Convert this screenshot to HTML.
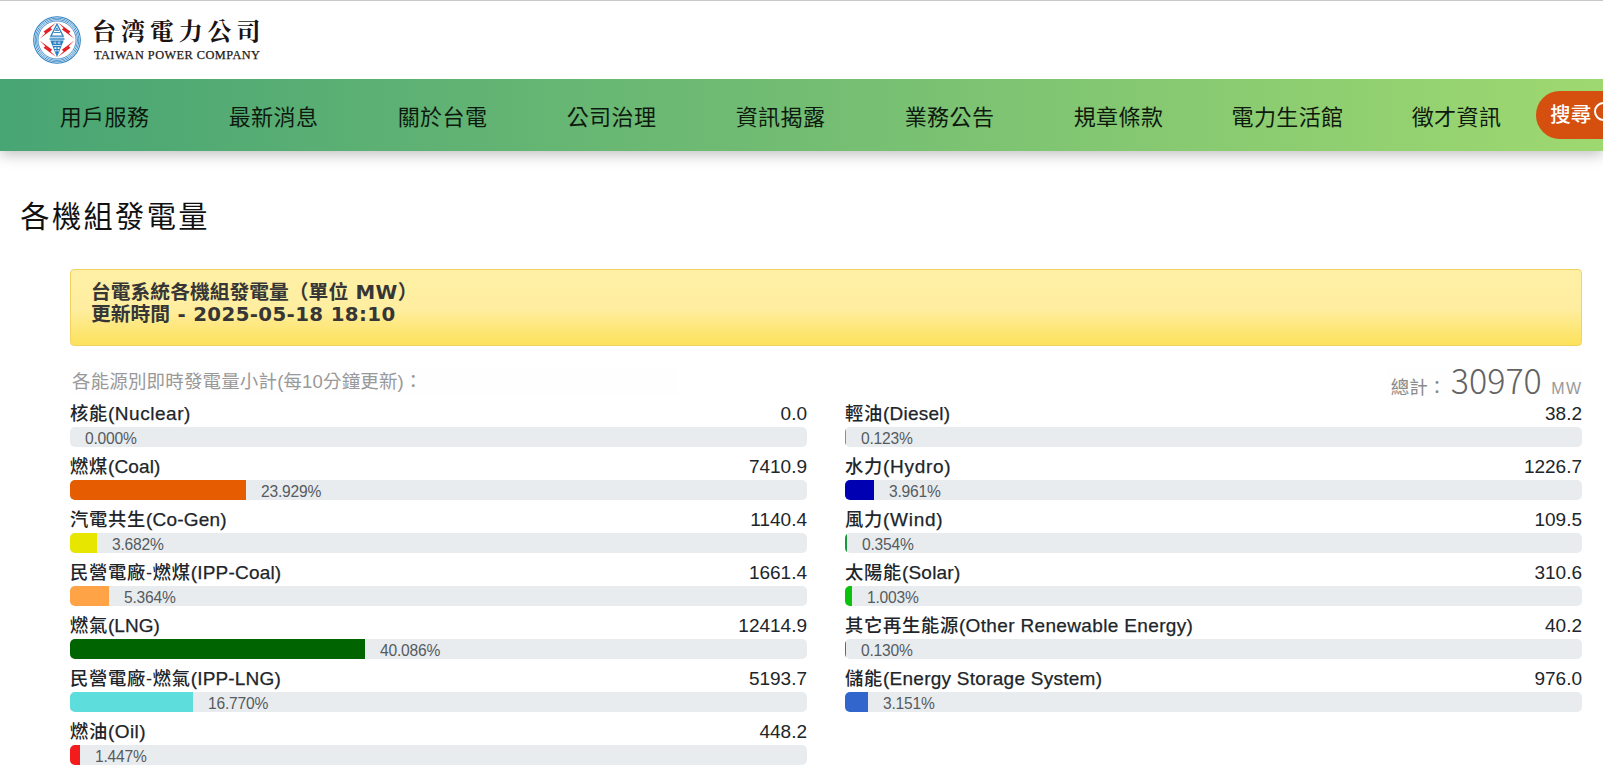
<!DOCTYPE html>
<html lang="zh-Hant">
<head>
<meta charset="utf-8">
<title>各機組發電量</title>
<style>
*{box-sizing:border-box;margin:0;padding:0}
html,body{width:1603px;height:780px;overflow:hidden;background:#fff}
body{position:relative;font-family:"Liberation Sans","Noto Sans CJK TC",sans-serif;color:#212529}
.topline{position:absolute;left:0;top:0;width:1603px;height:1px;background:#c8c8c8}
.logo{position:absolute;left:32.5px;top:16px;width:48px;height:48px}
.logo-zh{position:absolute;left:92px;top:14px;font-family:"Liberation Serif","Noto Serif CJK TC","Noto Serif CJK SC",serif;font-weight:700;font-size:24px;line-height:36px;letter-spacing:4.9px;color:#1a1311;white-space:nowrap}
.logo-en{position:absolute;left:94px;top:48px;font-family:"Liberation Serif",serif;font-size:12.3px;line-height:14px;color:#231815;white-space:nowrap;letter-spacing:.47px;-webkit-text-stroke:.25px #231815}
.nav{position:absolute;left:0;top:79px;width:1603px;height:72px;background:linear-gradient(90deg,#48a574 0%,#73bd73 50%,#9ed870 100%);box-shadow:0 3px 14px rgba(0,0,0,.27);clip-path:inset(0 0 -40px 0)}
.nav a{position:absolute;top:0;height:72px;line-height:77px;width:169px;text-align:center;font-size:22px;color:#0f1a0f;text-decoration:none;white-space:nowrap;letter-spacing:.4px}
.search{position:absolute;left:1535.7px;top:12px;width:90px;height:47.5px;border-radius:23.75px;background:#d5500f;color:#fff;font-weight:500;font-size:20.5px;line-height:48px;padding-left:14.5px;white-space:nowrap}
.search i{position:absolute;left:58.3px;top:11px;width:19px;height:19px;border:2.5px solid #fff;border-radius:50%}
h1{position:absolute;left:20.3px;top:194.8px;font-size:29.2px;line-height:44px;font-weight:400;color:#111;letter-spacing:2.4px;white-space:nowrap}
.hl{position:absolute;left:70px;top:269px;width:1512px;height:77px;border:1px solid #f1d263;border-radius:4px;background:linear-gradient(180deg,#fff0a6 0%,#ffeea0 52%,#fee77c 76%,#fde25c 100%);padding:12px 0 0 20px;font-family:"DejaVu Sans","Noto Sans CJK TC",sans-serif;font-weight:700;font-size:19.8px;line-height:21.7px;color:#363636;white-space:nowrap}
.hl .la{letter-spacing:.37px}
.sub{position:absolute;left:72px;top:368px;font-size:18.5px;line-height:27px;color:#999;white-space:nowrap;letter-spacing:.15px}
.total{position:absolute;right:22px;top:357.7px;height:44px;color:#8a8a8a;white-space:nowrap;font-size:18.5px;line-height:44px}
.total b{font-family:"Noto Sans CJK TC","Liberation Sans",sans-serif;font-weight:300;font-size:34px;color:#636363;margin:0 9.5px 0 4.5px}
.total small{font-size:16px;color:#999;letter-spacing:1.3px;margin-right:-1.3px}
.row{position:absolute;width:737px;height:53px}
.row .l{position:absolute;left:0;top:.7px;font-size:18.3px;letter-spacing:.7px;font-weight:500;line-height:28px;white-space:nowrap}
.row .l span{font-size:19px;-webkit-text-stroke:.25px #212529}
.row .v{position:absolute;right:0;top:.7px;font-size:19px;line-height:28px;white-space:nowrap}
.bar{position:absolute;left:0;top:28px;width:737px;height:20px;border-radius:5px;background:#e9ecef;overflow:hidden}
.bar i{position:absolute;left:0;top:0;height:20px;display:block}
.bar span{position:absolute;top:0;font-size:15.6px;line-height:23.8px;color:#555b60;white-space:nowrap;letter-spacing:-.2px}
</style>
</head>
<body>
<div class="topline"></div>
<svg class="logo" viewBox="0 0 48 48">
<circle cx="24" cy="24" r="23.3" fill="none" stroke="#2a80c2" stroke-width="1.1"/>
<circle cx="24" cy="24" r="21.85" fill="none" stroke="#2a80c2" stroke-width=".85"/>
<circle cx="24" cy="24" r="20.45" fill="none" stroke="#2a80c2" stroke-width=".85"/>
<circle cx="24" cy="24" r="19.05" fill="none" stroke="#2a80c2" stroke-width=".85"/>
<path d="M23.10 6.40 L12.21 17.22 L10.59 15.59 Z M6.60 22.80 L17.49 11.98 L19.11 13.61 Z M24.90 6.40 L35.79 17.22 L37.41 15.59 Z M41.40 22.80 L30.51 11.98 L28.89 13.61 Z M23.10 41.10 L12.21 30.21 L10.58 31.84 Z M6.60 24.60 L17.49 35.49 L19.12 33.86 Z M24.90 41.10 L35.79 30.21 L37.42 31.84 Z M41.40 24.60 L30.51 35.49 L28.88 33.86 Z" fill="#e21f26"/>
<path d="M24 6.7 L16.8 20.7 H31.2 Z M24 9.5 L18.9 19.6 H29.1 Z" fill="#2a80c2" fill-rule="evenodd"/>
<path d="M24 11 L21.9 15 H26.1 Z M24 12.8 L23.3 14.2 H24.7 Z" fill="#2a80c2" fill-rule="evenodd"/>
<rect x="20.6" y="16.1" width="6.8" height=".9" fill="#2a80c2"/>
<rect x="17" y="21.2" width="14" height=".6" fill="#8cc3ea"/>
<rect x="16.5" y="22.3" width="15" height="1.4" fill="#2a80c2"/>
<path d="M17.3 24.5 H30.7 L24 41.2 Z" fill="#2a80c2"/>
<path d="M21.2 25.6 V28 M26.8 25.6 V28 M22.7 25.6 V28 M25.3 25.6 V28" stroke="#fff" stroke-width=".7" fill="none"/>
<path d="M19.8 29.5 H28.2" stroke="#fff" stroke-width=".8" fill="none"/>
<path d="M21.5 31.3 H23.4 V32.9 H21.5 Z M24.6 31.3 H26.5 V32.9 H24.6 Z M22.3 34.1 H23.4 V35.5 H22.3 Z M24.6 34.1 H25.7 V35.5 H24.6 Z" fill="#fff"/>
</svg>
<div class="logo-zh">台湾電力公司</div>
<div class="logo-en">TAIWAN POWER COMPANY</div>

<div class="nav">
<a style="left:20px">用戶服務</a>
<a style="left:189px">最新消息</a>
<a style="left:358px">關於台電</a>
<a style="left:527px">公司治理</a>
<a style="left:696px">資訊揭露</a>
<a style="left:865px">業務公告</a>
<a style="left:1034px">規章條款</a>
<a style="left:1203px">電力生活館</a>
<a style="left:1372px">徵才資訊</a>
<div class="search">搜尋<i></i></div>
</div>

<h1>各機組發電量</h1>

<div class="hl">台電系統各機組發電量（單位<span class="la"> MW</span>）<br>更新時間<span class="la"> - 2025-05-18 18:10</span></div>

<div style="position:absolute;left:70px;top:368px;width:607px;height:27px;background:#fefefe"></div>
<div style="position:absolute;left:1387px;top:367px;width:195px;height:31px;background:#fefefe"></div>
<div class="sub">各能源別即時發電量小計(每10分鐘更新)：</div>
<div class="total">總計：<b>30970</b><small>MW</small></div>

<!-- left column -->
<div class="row" style="left:70px;top:399px"><div class="l">核能<span style="letter-spacing:0.54px">(Nuclear)</span></div><div class="v">0.0</div><div class="bar"><i style="width:0;background:#ff0"></i><span style="left:15px">0.000%</span></div></div>
<div class="row" style="left:70px;top:452px"><div class="l">燃煤<span style="letter-spacing:0.12px">(Coal)</span></div><div class="v">7410.9</div><div class="bar"><i style="width:176px;background:#e65c00"></i><span style="left:191px">23.929%</span></div></div>
<div class="row" style="left:70px;top:505px"><div class="l">汽電共生<span style="letter-spacing:0.2px">(Co-Gen)</span></div><div class="v">1140.4</div><div class="bar"><i style="width:27px;background:#e6e600"></i><span style="left:42px">3.682%</span></div></div>
<div class="row" style="left:70px;top:558px"><div class="l">民營電廠-燃煤<span style="letter-spacing:0.2px">(IPP-Coal)</span></div><div class="v">1661.4</div><div class="bar"><i style="width:39px;background:#ffa347"></i><span style="left:54px">5.364%</span></div></div>
<div class="row" style="left:70px;top:611px"><div class="l">燃氣<span style="letter-spacing:0.05px">(LNG)</span></div><div class="v">12414.9</div><div class="bar"><i style="width:295px;background:#006400"></i><span style="left:310px">40.086%</span></div></div>
<div class="row" style="left:70px;top:664px"><div class="l">民營電廠-燃氣<span style="letter-spacing:0.17px">(IPP-LNG)</span></div><div class="v">5193.7</div><div class="bar"><i style="width:123px;background:#5edddd"></i><span style="left:138px">16.770%</span></div></div>
<div class="row" style="left:70px;top:717px"><div class="l">燃油<span style="letter-spacing:0.42px">(Oil)</span></div><div class="v">448.2</div><div class="bar"><i style="width:10px;background:#f31b1b"></i><span style="left:25px">1.447%</span></div></div>

<!-- right column -->
<div class="row" style="left:845px;top:399px"><div class="l">輕油<span style="letter-spacing:0.25px">(Diesel)</span></div><div class="v">38.2</div><div class="bar"><i style="width:1px;background:#8c8c8c"></i><span style="left:16px">0.123%</span></div></div>
<div class="row" style="left:845px;top:452px"><div class="l">水力<span style="letter-spacing:0.73px">(Hydro)</span></div><div class="v">1226.7</div><div class="bar"><i style="width:29px;background:#0000b3"></i><span style="left:44px">3.961%</span></div></div>
<div class="row" style="left:845px;top:505px"><div class="l">風力<span style="letter-spacing:0.75px">(Wind)</span></div><div class="v">109.5</div><div class="bar"><i style="width:2px;background:#1a9641"></i><span style="left:17px">0.354%</span></div></div>
<div class="row" style="left:845px;top:558px"><div class="l">太陽能<span style="letter-spacing:0.21px">(Solar)</span></div><div class="v">310.6</div><div class="bar"><i style="width:7px;background:#0cc20c"></i><span style="left:22px">1.003%</span></div></div>
<div class="row" style="left:845px;top:611px"><div class="l">其它再生能源<span style="letter-spacing:0.35px">(Other Renewable Energy)</span></div><div class="v">40.2</div><div class="bar"><i style="width:1px;background:#3a6fb0"></i><span style="left:16px">0.130%</span></div></div>
<div class="row" style="left:845px;top:664px"><div class="l">儲能<span style="letter-spacing:0.26px">(Energy Storage System)</span></div><div class="v">976.0</div><div class="bar"><i style="width:23px;background:#3366cc"></i><span style="left:38px">3.151%</span></div></div>
</body>
</html>
